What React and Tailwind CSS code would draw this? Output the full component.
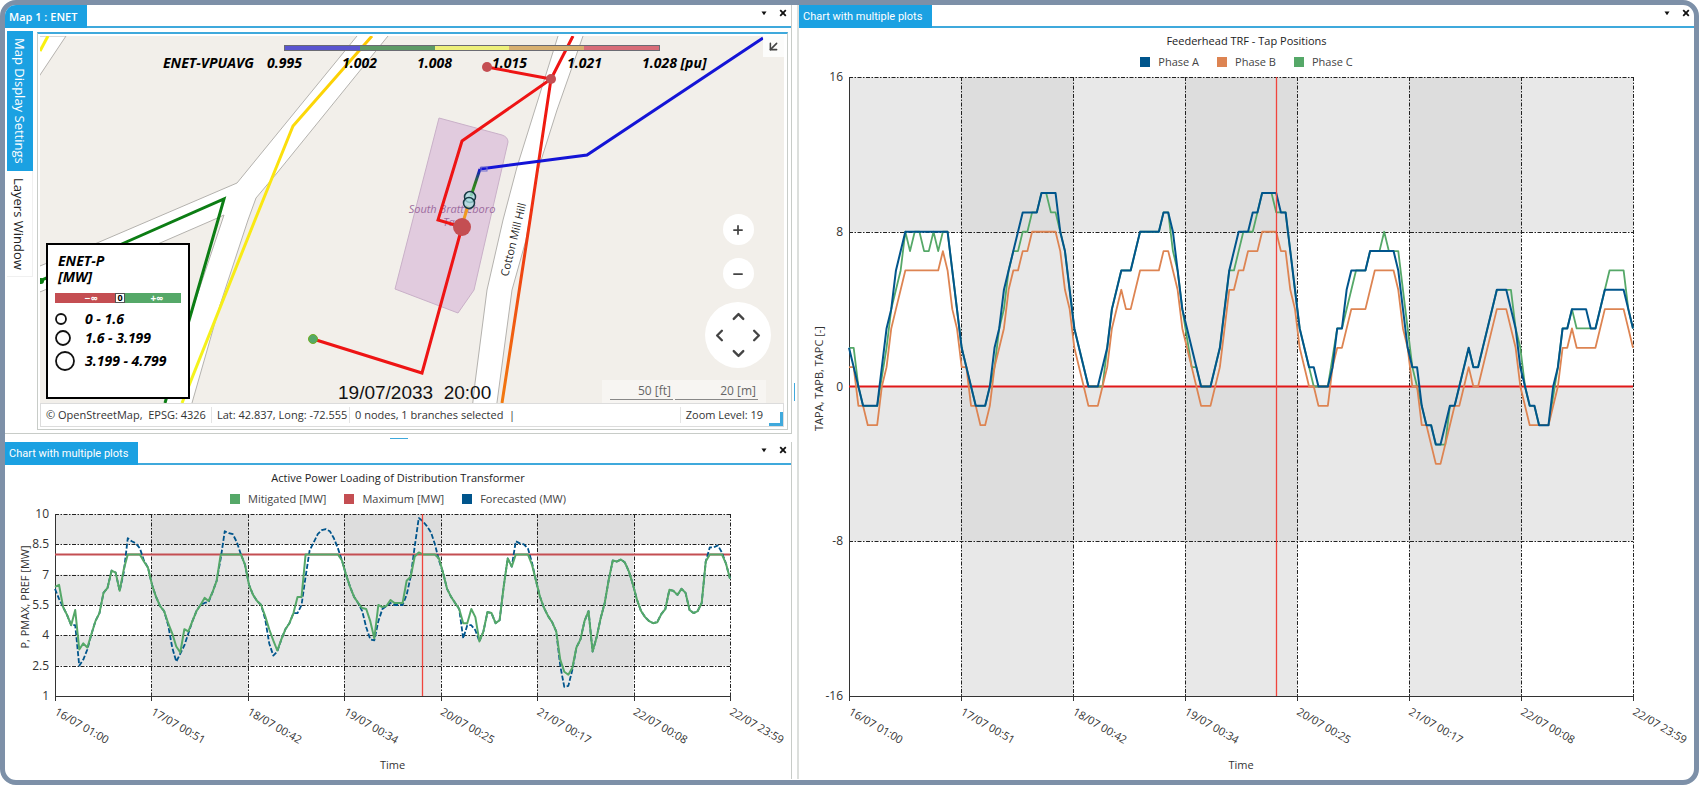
import { ArrowDownLeft, ChevronDown, ChevronLeft, ChevronRight, ChevronUp, Minus, Plus } from "lucide-react";

const HOURS = 167;
const GREEN = "#55a868";
const RED = "#c44e52";
const BLUE = "#00558c";
const ORANGE = "#dd8452";

const dayLabels = [
  "16/07 01:00",
  "17/07 00:51",
  "18/07 00:42",
  "19/07 00:34",
  "20/07 00:25",
  "21/07 00:17",
  "22/07 00:08",
  "22/07 23:59",
];

// hourly transformer loading in MW
const mitigated = [
  6.4, 6.5, 5.4, 5, 4.5, 5.25, 3.3, 3.6, 3.4, 4.05, 4.7, 5.1, 6.1, 6.35, 7.2, 7.1, 6.2, 7.25, 8, 8, 8, 8, 7.65, 7.35,
  6.5, 5.9, 5.45, 5.2, 4.6, 4.1, 3.45, 3.15, 4.3, 4.2, 4.7, 5.2, 5.5, 5.85, 5.7, 6.15, 6.7, 8, 8, 8, 8, 8, 8, 7.5,
  6.5, 6, 5.7, 5.5, 4.95, 4.3, 3.75, 3.25, 3.8, 4.3, 4.6, 5.1, 5.9, 5.9, 8, 8, 8, 8, 8, 8, 8, 8, 8, 7.7,
  7, 6.4, 5.9, 5.6, 5.35, 5.3, 4.7, 3.85, 5.5, 5.4, 5.45, 5.75, 5.6, 5.6, 5.6, 6.7, 6.9, 7.9, 8.1, 8, 8, 8, 8, 7.8,
  7.1, 6.3, 5.9, 5.6, 5.3, 4.6, 4.6, 5.3, 4.9, 3.7, 4.2, 5.15, 5.1, 4.6, 4.75, 6.4, 7.8, 7.4, 8, 8, 8, 8, 7.5, 6.7,
  5.9, 5.35, 4.95, 4.65, 4.2, 2.8, 2.2, 2.05, 2.4, 3.4, 3.8, 4.7, 5.2, 3.2, 3.9, 4.85, 5.6, 6.75, 7.7, 7.65, 7.75, 7.6, 7.15, 6.5,
  5.75, 5.2, 4.9, 4.7, 4.6, 4.65, 5.05, 5.3, 6.25, 6.2, 6, 6.3, 6.1, 5.25, 5.1, 5.2, 5.6, 7.65, 8, 8, 8, 8, 7.55, 6.8,
];

// the forecast equals the mitigated load except in these hours
const forecastOverrides = {
  0: 6.3, 1: 5.8, 5: 4.5, 6: 2.5, 7: 2.8, 8: 3.3, 17: 7.1, 18: 8.8, 19: 8.65, 20: 8.55, 21: 8.3, 22: 7.7,
  28: 4.5, 29: 3.4, 30: 2.7, 31: 3.1, 32: 3.5, 33: 4.1, 37: 5.6, 38: 5.65, 41: 7.8, 42: 9.15, 43: 9.05, 44: 9, 45: 8.6, 46: 8,
  52: 4.8, 53: 3.6, 54: 3, 55: 3.2, 60: 5.1, 61: 5.5, 62: 6.9, 63: 8.2, 64: 8.6, 65: 9, 66: 9.2, 67: 9.25, 68: 9.15, 69: 8.8, 70: 8.3,
  76: 5.2, 77: 4.4, 78: 3.8, 79: 3.75, 80: 4.7, 81: 5.3, 83: 5.6, 84: 5.5, 85: 5.5, 86: 5.5, 87: 6, 88: 6.9, 89: 8.4, 90: 9.8,
  91: 9.65, 92: 9.4, 93: 9.1, 94: 8.5, 95: 7.7, 101: 3.85, 102: 4.5, 103: 4.5, 104: 4.25, 114: 8.65, 115: 8.55, 116: 8.5, 117: 8.3,
  118: 7.6, 125: 2.5, 126: 1.45, 127: 1.5, 128: 2.3, 162: 8.35, 163: 8.35, 164: 8.45, 165: 8.1,
};

const hourly = (values) => values.map((v, i) => [i, v]);
const forecast = mitigated.map((v, i) => forecastOverrides[i] ?? v);

// tap positions as [hour, tap] corner points
const phaseA = [
  [0, 2], [2, 0], [3, -1], [6, -1], [7, 1], [8, 3], [9, 4], [10, 6], [12, 8], [21, 8], [22, 6], [23, 4], [24, 2], [26, 0],
  [27, -1], [29, -1], [30, 0], [31, 2], [32, 3], [33, 5], [35, 7], [36, 8], [37, 9], [40, 9], [41, 10], [44, 10], [45, 8],
  [46, 7], [47, 5], [48, 3], [51, 0], [53, 0], [55, 2], [56, 4], [58, 6], [60, 6], [62, 8], [66, 8], [67, 9], [68, 9],
  [69, 8], [70, 6], [71, 4], [72, 3], [74, 1], [75, 0], [77, 0], [79, 2], [80, 4], [81, 6], [83, 8], [85, 8], [86, 9],
  [87, 9], [88, 10], [91, 10], [92, 9], [93, 9], [94, 7], [95, 5], [96, 3], [98, 1], [99, 1], [100, 0], [102, 0], [103, 1],
  [104, 3], [105, 3], [106, 5], [107, 6], [110, 6], [111, 7], [116, 7], [117, 6], [118, 4], [119, 2], [120, 1], [121, 1],
  [122, -1], [123, -2], [124, -2], [125, -3], [126, -3], [127, -2], [128, -1], [129, -1], [130, 0], [132, 2], [133, 1],
  [134, 1], [135, 2], [138, 5], [140, 5], [141, 4], [142, 3], [143, 1], [144, 0], [145, -1], [146, -1], [147, -2],
  [149, -2], [150, 0], [151, 1], [152, 3], [153, 3], [154, 4], [157, 4], [158, 3], [159, 3], [161, 5], [165, 5], [166, 4], [167, 3],
];

const phaseB = [
  [0, 1], [1, 1], [2, -1], [3, -1], [4, -2], [6, -2], [7, 0], [8, 1], [9, 3], [10, 4], [12, 6], [19, 6], [20, 7], [21, 6],
  [22, 4], [23, 3], [24, 1], [25, 1], [26, -1], [27, -1], [28, -2], [29, -2], [30, -1], [31, 1], [33, 3], [34, 5], [35, 6],
  [36, 6], [37, 7], [38, 7], [39, 8], [44, 8], [45, 7], [46, 5], [47, 4], [48, 2], [50, 0], [51, -1], [53, -1], [54, 0],
  [55, 1], [56, 3], [58, 5], [59, 4], [60, 4], [62, 6], [66, 6], [67, 7], [68, 7], [69, 6], [70, 5], [71, 3], [73, 1],
  [74, 0], [75, -1], [77, -1], [78, 0], [79, 1], [80, 3], [81, 5], [82, 5], [83, 6], [84, 6], [85, 7], [87, 7], [88, 8],
  [91, 8], [92, 7], [93, 7], [94, 5], [95, 4], [96, 2], [98, 0], [99, 0], [100, -1], [102, -1], [103, 1], [104, 2],
  [105, 2], [107, 4], [110, 4], [112, 6], [116, 6], [117, 5], [118, 3], [119, 2], [120, 0], [121, 0], [122, -2],
  [123, -2], [125, -4], [126, -4], [128, -2], [129, -1], [130, -1], [131, 0], [132, 1], [133, 0], [134, 0], [138, 4],
  [140, 4], [142, 2], [143, 0], [145, -2], [149, -2], [151, 0], [152, 2], [153, 2], [154, 3], [155, 2], [159, 2],
  [161, 4], [165, 4], [167, 2],
];

const phaseC = [
  [0, 2], [1, 2], [2, 0], [3, -1], [6, -1], [8, 2], [9, 4], [10, 5], [11, 6], [12, 8], [13, 7], [14, 8], [15, 8], [16, 7],
  [17, 7], [18, 8], [19, 7], [20, 8], [21, 8], [22, 6], [23, 4], [24, 2], [26, 0], [27, -1], [29, -1], [30, 0], [31, 1],
  [32, 3], [33, 4], [34, 6], [35, 7], [36, 7], [37, 8], [38, 8], [39, 9], [40, 9], [41, 10], [42, 10], [43, 9], [44, 9],
  [45, 8], [46, 7], [47, 5], [48, 3], [51, 0], [54, 0], [55, 2], [56, 4], [58, 6], [60, 6], [62, 8], [66, 8], [67, 9],
  [68, 9], [69, 7], [70, 6], [71, 4], [73, 1], [74, 1], [75, 0], [77, 0], [79, 2], [81, 6], [82, 6], [84, 8], [86, 8],
  [87, 9], [88, 10], [90, 10], [91, 9], [93, 9], [94, 7], [96, 3], [98, 1], [99, 0], [102, 0], [104, 3], [105, 3],
  [108, 6], [110, 6], [111, 7], [113, 7], [114, 8], [115, 7], [117, 7], [118, 5], [119, 3], [120, 1], [121, 0],
  [122, -1], [123, -2], [124, -2], [125, -3], [127, -3], [128, -1], [129, -1], [130, 0], [132, 2], [133, 1], [134, 1],
  [138, 5], [141, 5], [142, 3], [143, 2], [144, 0], [145, -1], [146, -1], [147, -2], [149, -2], [151, 1], [152, 3],
  [153, 3], [154, 4], [155, 3], [159, 3], [161, 5], [162, 6], [165, 6], [166, 4], [167, 3],
];

function PanelHeader({ title, bold }) {
  return (
    <header className="flex h-[23px] items-stretch justify-between border-b-2 border-[#3fa9dc]">
      <h2
        className={`-mb-0.5 bg-[#1ba1e2] pr-2.5 pl-1 text-[11px] leading-[23px] text-white ${
          bold ? "font-semibold" : "font-['Roboto','Open_Sans',sans-serif] font-normal"
        }`}
      >
        {title}
      </h2>
      <div className="flex items-start gap-[3px]">
        <button type="button" aria-label="Panel menu" className="p-1">
          <svg viewBox="0 0 8 8" className="size-2">
            <path d="M1.5 2.5h5L4 6.2z" fill="#111" />
          </svg>
        </button>
        <button type="button" aria-label="Close panel" className="p-1">
          <svg viewBox="0 0 8 8" className="size-2">
            <path d="M1.2 1.2l5.6 5.6M6.8 1.2L1.2 6.8" stroke="#111" strokeWidth="1.8" />
          </svg>
        </button>
      </div>
    </header>
  );
}

function Chart({ title, legend, width, height, plot, yTicks, yLabel, series, lines, cursor }) {
  const { left, right, top, bottom } = plot;
  const max = yTicks[0];
  const min = yTicks[yTicks.length - 1];
  const x = (h) => left + ((right - left) * h) / HOURS;
  const y = (v) => top + ((bottom - top) * (max - v)) / (max - min);
  const xs = dayLabels.map((_, i) => left + ((right - left) * i) / (dayLabels.length - 1));
  const dayBands = [1, 3, 5].map((i) => [xs[i], xs[i + 1] - xs[i]]);
  const valueBands = yTicks
    .slice(0, -1)
    .map((v, i) => [y(v), y(yTicks[i + 1]) - y(v)])
    .filter((_, i) => i % 2 === 0);
  const gridTicks = yTicks.slice(0, -1).filter((v) => !lines.some((l) => l.value === v));

  return (
    <figure className="flex flex-col text-[#222]">
      <figcaption className="pt-[5px] text-center text-[11px] leading-4 font-medium">{title}</figcaption>
      <ul className="flex items-center justify-center gap-[18px] pt-[5px] text-[11px] leading-4 text-[#444]">
        {legend.map((item) => (
          <li key={item.label} className="flex items-center gap-2">
            <svg viewBox="0 0 10 10" className="size-2.5">
              <rect width="10" height="10" fill={item.color} />
            </svg>
            {item.label}
          </li>
        ))}
      </ul>
      <svg viewBox={`0 0 ${width} ${height}`} className="h-auto w-full overflow-visible text-[12px]" fill="#333">
        {valueBands.map(([by, bh]) => (
          <rect key={by} x={left} y={by} width={right - left} height={bh} fill="#e8e8e8" />
        ))}
        {dayBands.map(([bx, bw]) => (
          <g key={bx}>
            <rect x={bx} y={top} width={bw} height={bottom - top} fill="#e8e8e8" />
            {valueBands.map(([by, bh]) => (
              <rect key={by} x={bx} y={by} width={bw} height={bh} fill="#dddddd" />
            ))}
          </g>
        ))}

        <g stroke="#222" strokeWidth="1" strokeDasharray="4 1.5 1.5 1.5">
          {gridTicks.map((v) => (
            <line key={v} x1={left} x2={right} y1={Math.round(y(v)) + 0.5} y2={Math.round(y(v)) + 0.5} />
          ))}
          {xs.slice(1).map((gx) => (
            <line key={gx} y1={top} y2={bottom} x1={Math.round(gx) + 0.5} x2={Math.round(gx) + 0.5} />
          ))}
        </g>
        <g stroke="#333" strokeWidth="1">
          <line x1={left + 0.5} x2={left + 0.5} y1={top} y2={bottom} />
          <line x1={left} x2={right} y1={bottom + 0.5} y2={bottom + 0.5} />
          {xs.map((gx) => (
            <line key={gx} y1={bottom - 2} y2={bottom + 5} x1={Math.round(gx) + 0.5} x2={Math.round(gx) + 0.5} />
          ))}
        </g>

        {lines.map((l) => (
          <line key={l.value} x1={left} x2={right} y1={y(l.value)} y2={y(l.value)} stroke={l.color} strokeWidth="2" />
        ))}
        {series.map((s) => (
          <polyline
            key={s.color}
            points={s.points.map(([h, v]) => `${x(h)},${y(v)}`).join(" ")}
            fill="none"
            stroke={s.color}
            strokeWidth={s.strokeWidth}
            strokeDasharray={s.dash}
            strokeLinejoin="round"
          />
        ))}
        <line x1={cursor} x2={cursor} y1={top} y2={bottom} stroke="#f0443c" strokeWidth="1.3" />

        {yTicks.map((v) => (
          <text key={v} x={left - 6} y={y(v) + 4} textAnchor="end">
            {v}
          </text>
        ))}
        {dayLabels.map((label, i) => (
          <text key={label} transform={`translate(${xs[i] - 1} ${bottom + 18}) rotate(30)`} className="text-[11px]">
            {label}
          </text>
        ))}
        <text transform={`translate(${left - 26} ${(top + bottom) / 2 - 8}) rotate(-90)`} textAnchor="middle" className="text-[11px]">
          {yLabel}
        </text>
        <text x={(left + right) / 2} y={bottom + 73} textAnchor="middle" className="text-[11px] font-medium">
          Time
        </text>
      </svg>
    </figure>
  );
}

function MapDrawing() {
  return (
    <svg viewBox="40 36 744 367" className="block h-auto w-full">
      <defs>
        <linearGradient id="feederYellow" x1="0" y1="0" x2="0" y2="1">
          <stop offset="0" stopColor="#fcc800" />
          <stop offset="0.4" stopColor="#fbe610" />
          <stop offset="1" stopColor="#f3f520" />
        </linearGradient>
        <linearGradient id="feederRed" x1="0" y1="0" x2="0" y2="1">
          <stop offset="0" stopColor="#f01010" />
          <stop offset="0.5" stopColor="#ee3a12" />
          <stop offset="1" stopColor="#f27a10" />
        </linearGradient>
        <linearGradient id="branchTop" x1="0" y1="0" x2="0" y2="1">
          <stop offset="0" stopColor="#1010d8" />
          <stop offset="0.5" stopColor="#2f7a20" />
          <stop offset="1" stopColor="#2f9a20" />
        </linearGradient>
      </defs>
      <rect x="40" y="36" width="744" height="367" fill="#f2efea" />

      {/* roads */}
      <g fill="#fff" stroke="#b4b2ae" strokeWidth="1">
        <path d="M30 36H66L40 75L30 90z" />
        <path d="M357 36L237 183L97 243L30 270V296L160 243L213 220L224 215L190 317L163 410H190L220 305L248 220L256 198L277 173L388 36L388 30H360z" />
        <path d="M560 30L558 36L537 103L517 167L503 220L487 290L475 383L472 410H496L512 290L526 240L538 170L557 110L583 36V30z" />
      </g>
      <path d="M439 118L502 135Q508 137 508 142L490 220L474 290L458 313L395 289z" fill="#e1cbde" stroke="#c9b0c8" strokeWidth="1" />

      <g className="text-[11px] italic" fill="#9d6c9f" textAnchor="middle">
        <text x="452" y="213">South Brattleboro</text>
        <text x="452" y="226">Tap</text>
      </g>
      <text transform="translate(508 277) rotate(-76)" className="text-[11px]" fill="#222">
        Cotton Mill Hill
      </text>

      <g fill="none" strokeWidth="3">
        <path d="M48 36L40 51" stroke="#f8f010" />
        <path d="M372 36L293 126L255 220L182 403" stroke="url(#feederYellow)" />
        <path d="M40 281L124 243L224 199L218 220L190 317L165 403" stroke="#0c7d14" />
        <path d="M551 79L530 220L502 403" stroke="url(#feederRed)" />
        <g stroke="#ee1414">
          <path d="M573 36L551 79L487 67" />
          <path d="M551 79L462 141L438 220L462 227L422 373L313 339" />
        </g>
        <path d="M763 38L587 155L480 169" stroke="#1414d6" />
        <path d="M480 169L471 196" stroke="url(#branchTop)" />
        <path d="M468 206L463 222" stroke="#f09a20" />
      </g>
      <rect x="481" y="167" width="6" height="4" fill="none" stroke="#7070d0" strokeWidth="1" />
      <circle cx="41" cy="281" r="3" fill="#0c7d14" />
      <g fill={RED}>
        <circle cx="487" cy="67" r="5" />
        <circle cx="551" cy="79" r="5" />
        <circle cx="462" cy="227" r="9" />
      </g>
      <circle cx="313" cy="339" r="4.5" fill={GREEN} stroke="#6fae20" strokeWidth="1" />
      <g fill="#a9dfe2" fillOpacity="0.75" stroke="#173a44" strokeWidth="1.5">
        <circle cx="470" cy="197" r="5.5" />
        <circle cx="469" cy="203" r="5.5" />
      </g>
    </svg>
  );
}

function VoltageScale() {
  const stops = ["0.995", "1.002", "1.008", "1.015", "1.021", "1.028 [pu]"];
  return (
    <div className="absolute top-[9px] left-[123px] text-sm leading-5 font-bold text-black italic">
      <div className="ml-[121px] flex h-1.5 w-[376px] border border-[#6b6b73]">
        <span className="flex-1 bg-[#5a55d0]" />
        <span className="flex-1 bg-[#5d9a66]" />
        <span className="flex-1 bg-[#eef07a]" />
        <span className="flex-1 bg-[#d8b070]" />
        <span className="flex-1 bg-[#d86c78]" />
      </div>
      <div className="flex pt-0.5">
        <span className="w-[104px]">ENET-VPUAVG</span>
        {stops.map((s) => (
          <span key={s} className="w-[75px] whitespace-nowrap">
            {s}
          </span>
        ))}
      </div>
    </div>
  );
}

function PowerLegend() {
  const sizes = [
    { label: "0 - 1.6", r: 5, row: "h-[18px]" },
    { label: "1.6 - 3.199", r: 7, row: "h-5" },
    { label: "3.199 - 4.799", r: 9, row: "h-[26px]" },
  ];
  return (
    <div className="absolute bottom-1 left-1.5 h-[156px] w-36 border-2 border-black bg-white px-[7px] pt-2 text-sm font-bold text-black italic">
      <p className="pl-[3px] leading-4">
        ENET-P
        <br />
        [MW]
      </p>
      <div className="mt-2 mb-[7px] flex h-2.5 items-center text-[10px] leading-[10px] text-white not-italic">
        <span className="h-full flex-1 bg-[#c44e52] pl-3 text-center">−∞</span>
        <span className="border border-[#555] bg-white px-px text-[9px] leading-2 text-black">0</span>
        <span className="h-full flex-1 bg-[#55a868] pl-2 text-center">+∞</span>
      </div>
      {sizes.map((s) => (
        <div key={s.label} className={`flex items-center whitespace-nowrap ${s.row}`}>
          <span className="w-[30px] shrink-0">
            <svg className="h-[22px] w-[22px]" viewBox="0 0 22 22">
              <circle cx={s.r + 1} cy="11" r={s.r} fill="none" stroke="#111" strokeWidth="1.8" />
            </svg>
          </span>
          {s.label}
        </div>
      ))}
    </div>
  );
}

function MapControls() {
  const round = "grid size-[31px] place-items-center rounded-full bg-white text-[#444]";
  return (
    <>
      <button
        type="button"
        aria-label="Collapse"
        className="absolute top-0 right-0 grid size-[21px] place-items-center bg-white/80 text-[#444]"
      >
        <ArrowDownLeft size={15} strokeWidth={2.5} />
      </button>
      <div className="absolute right-[13px] bottom-[35px] flex flex-col items-center gap-[13px] text-[#444]">
        <button type="button" aria-label="Zoom in" className={round}>
          <Plus size={14} strokeWidth={3} />
        </button>
        <button type="button" aria-label="Zoom out" className={round}>
          <Minus size={14} strokeWidth={3} />
        </button>
        <div className="grid size-[66px] grid-cols-3 grid-rows-3 place-items-center rounded-full bg-white p-[5px]">
          <button type="button" aria-label="Pan up" className="col-start-2">
            <ChevronUp size={19} strokeWidth={3} />
          </button>
          <button type="button" aria-label="Pan left" className="col-start-1 row-start-2">
            <ChevronLeft size={19} strokeWidth={3} />
          </button>
          <button type="button" aria-label="Pan right" className="col-start-3 row-start-2">
            <ChevronRight size={19} strokeWidth={3} />
          </button>
          <button type="button" aria-label="Pan down" className="col-start-2 row-start-3">
            <ChevronDown size={19} strokeWidth={3} />
          </button>
        </div>
      </div>
      <div className="absolute right-[18px] bottom-0 flex h-[23px] gap-0.5 bg-white/40 px-2 pt-[3px] text-right text-xs leading-4 text-[#666]">
        <span className="h-[17px] w-[63px] border-b border-[#888] pr-0.5">50 [ft]</span>
        <span className="h-[17px] w-[83px] border-b border-[#888] pr-0.5">20 [m]</span>
      </div>
    </>
  );
}

function MapPanel() {
  return (
    <section className="border-r border-b border-[#c8ccc8]">
      <PanelHeader title="Map 1 : ENET" bold />
      <div className="flex gap-1 pt-1 pr-[3px] pb-[3px] pl-0.5">
        <nav className="-mt-px flex w-[26px] flex-col text-[13px] leading-[26px]">
          <button type="button" className="h-[140px] bg-[#1ba1e2] text-white [writing-mode:vertical-rl]">
            Map Display Settings
          </button>
          <button type="button" className="h-[106px] border-r border-b border-[#f0f0f0] text-[#222] [writing-mode:vertical-rl]">
            Layers Window
          </button>
        </nav>
        <div className="min-w-0 flex-1 border border-t-2 border-[#c8ccc8] border-t-[#3fa9dc] pt-0.5 pr-[3px] pb-0.5 pl-0.5">
          <div className="relative overflow-hidden">
            <MapDrawing />
            <VoltageScale />
            <PowerLegend />
            <MapControls />
            <time className="absolute bottom-0 left-[298px] font-['Liberation_Sans_Narrow','Liberation_Sans',sans-serif] text-[19px] leading-5 whitespace-pre text-[#111]">
              {"19/07/2033  20:00"}
            </time>
          </div>
          <footer className="relative flex h-6 items-center border border-[#dcdcdc] pl-[5px] text-[11px] whitespace-nowrap text-[#333]">
            <span className="w-[166px] border-r border-[#e4e4e4]">© OpenStreetMap,&nbsp; EPSG: 4326</span>
            <span className="w-[138px] border-r border-[#e4e4e4] pl-[5px]">Lat: 42.837, Long: -72.555</span>
            <span className="pl-[5px]">0 nodes, 1 branches selected &nbsp;|</span>
            <span className="mr-[20px] ml-auto border-l border-[#e4e4e4] pl-[5px]">Zoom Level: 19</span>
            <span className="absolute right-0 bottom-0 h-3.5 w-3.5 border-r-[3px] border-b-[3px] border-[#3fa9dc]" />
          </footer>
        </div>
      </div>
    </section>
  );
}

export default function App() {
  return (
    <main className="min-h-screen overflow-hidden rounded-2xl border-[5px] border-[#7d90a8] bg-white font-['Open_Sans','Noto_Sans',sans-serif]">
      <div className="grid grid-cols-[minmax(0,794fr)_minmax(0,895fr)]">
        <div className="flex border-r-2 border-[#dcdfdc]">
          <div className="flex min-w-0 flex-1 flex-col">
            <MapPanel />
            <div className="grid h-2 place-items-center">
              <span className="h-px w-[18px] bg-[#3fa9dc]" />
            </div>
            <section className="flex-1 border-r border-[#c8ccc8]">
              <PanelHeader title="Chart with multiple plots" />
              <Chart
                title="Active Power Loading of Distribution Transformer"
                legend={[
                  { label: "Mitigated [MW]", color: GREEN },
                  { label: "Maximum [MW]", color: RED },
                  { label: "Forecasted (MW)", color: BLUE },
                ]}
                width={786}
                height={270}
                plot={{ left: 50, right: 725, top: 7, bottom: 189 }}
                yTicks={[10, 8.5, 7, 5.5, 4, 2.5, 1]}
                yLabel="P, PMAX, PREF [MW]"
                lines={[{ value: 8, color: RED }]}
                series={[
                  { points: hourly(forecast), color: BLUE, strokeWidth: 1.8, dash: "5 2" },
                  { points: hourly(mitigated), color: GREEN, strokeWidth: 2 },
                ]}
                cursor={417.5}
              />
            </section>
          </div>
          <div className="flex w-[5px] items-center justify-center">
            <span className="h-[18px] w-px bg-[#3fa9dc]" />
          </div>
        </div>

        <section>
          <PanelHeader title="Chart with multiple plots" />
          <Chart
            title="Feederhead TRF - Tap Positions"
            legend={[
              { label: "Phase A", color: BLUE },
              { label: "Phase B", color: ORANGE },
              { label: "Phase C", color: GREEN },
            ]}
            width={895}
            height={709}
            plot={{ left: 50, right: 834, top: 7, bottom: 626 }}
            yTicks={[16, 8, 0, -8, -16]}
            yLabel="TAPA, TAPB, TAPC [-]"
            lines={[{ value: 0, color: "#e01818" }]}
            series={[
              { points: phaseC, color: GREEN, strokeWidth: 1.8 },
              { points: phaseB, color: ORANGE, strokeWidth: 1.8 },
              { points: phaseA, color: BLUE, strokeWidth: 2 },
            ]}
            cursor={477.5}
          />
        </section>
      </div>
    </main>
  );
}
